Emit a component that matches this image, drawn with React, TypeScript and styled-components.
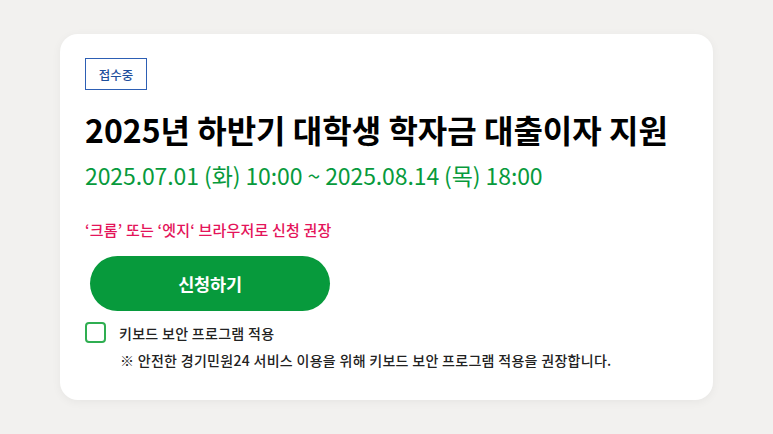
import React, { useState } from 'react';
import styled, { createGlobalStyle } from 'styled-components';

const GlobalStyle = createGlobalStyle`
    html, body {
        margin: 0;
        padding: 0;
        background: #f2f1ef;
        font-family: 'Noto Sans CJK KR', 'Noto Sans', sans-serif;
    }
`;

const Page = styled.div`
    width: 773px;
    height: 434px;
    padding: 34px 60px;
    box-sizing: border-box;
`;

const Card = styled.section`
    background: #ffffff;
    border-radius: 18px;
    box-shadow: 0 2px 10px rgba(0, 0, 0, 0.05);
    height: 366px;
    box-sizing: border-box;
    padding: 24px 25px 0;
    display: flex;
    flex-direction: column;
    align-items: flex-start;
`;

const Badge = styled.span`
    display: inline-flex;
    align-items: center;
    justify-content: center;
    width: 62px;
    height: 32px;
    box-sizing: border-box;
    border: 1px solid #2d5fb4;
    color: #1f4f9c;
    font-size: 12.5px;
    font-weight: 500;
`;

const Title = styled.h1`
    margin: 19px 0 0;
    font-size: 32px;
    font-weight: 700;
    color: #000;
    letter-spacing: 0;
    line-height: 40px;
`;

const Period = styled.p`
    margin: 10px 0 0;
    font-size: 23px;
    font-weight: 400;
    color: #079a3c;
    letter-spacing: -0.1px;
    line-height: 32px;
`;

const Notice = styled.p`
    margin: 29px 0 0;
    font-size: 15px;
    font-weight: 500;
    color: #e4145a;
    letter-spacing: 0.2px;
    line-height: 20px;
`;

const ApplyButton = styled.button`
    margin: 16px 0 0 5px;
    width: 240px;
    height: 55px;
    border: none;
    border-radius: 28px;
    background: #079a3c;
    color: #fff;
    font-family: inherit;
    font-size: 17.5px;
    font-weight: 700;
    letter-spacing: -0.2px;
    cursor: pointer;
`;

const SecurityRow = styled.label`
    margin-top: 11px;
    display: flex;
    align-items: center;
    gap: 13px;
    cursor: pointer;
`;

const Check = styled.span<{ $checked: boolean }>`
    width: 21px;
    height: 21px;
    box-sizing: border-box;
    border: 2px solid #2fae51;
    border-radius: 4px;
    background: ${p => (p.$checked ? '#2fae51' : '#fff')};
`;

const CheckLabel = styled.span`
    font-size: 14px;
    font-weight: 500;
    color: #222;
    letter-spacing: 0.3px;
`;

const Hint = styled.p`
    margin: 7px 0 0 35px;
    font-size: 14px;
    font-weight: 500;
    color: #222;
    letter-spacing: 0.3px;
    line-height: 20px;
`;

export default function App() {
    const [checked, setChecked] = useState(false);

    return (
        <Page>
            <GlobalStyle />
            <Card>
                <Badge>접수중</Badge>
                <Title>2025년 하반기 대학생 학자금 대출이자 지원</Title>
                <Period>2025.07.01 (화) 10:00 ~ 2025.08.14 (목) 18:00</Period>
                <Notice>‘크롬’ 또는 ‘엣지‘ 브라우저로 신청 권장</Notice>
                <ApplyButton>신청하기</ApplyButton>
                <SecurityRow onClick={() => setChecked(!checked)}>
                    <Check $checked={checked} />
                    <CheckLabel>키보드 보안 프로그램 적용</CheckLabel>
                </SecurityRow>
                <Hint>※ 안전한 경기민원24 서비스 이용을 위해 키보드 보안 프로그램 적용을 권장합니다.</Hint>
            </Card>
        </Page>
    );
}
